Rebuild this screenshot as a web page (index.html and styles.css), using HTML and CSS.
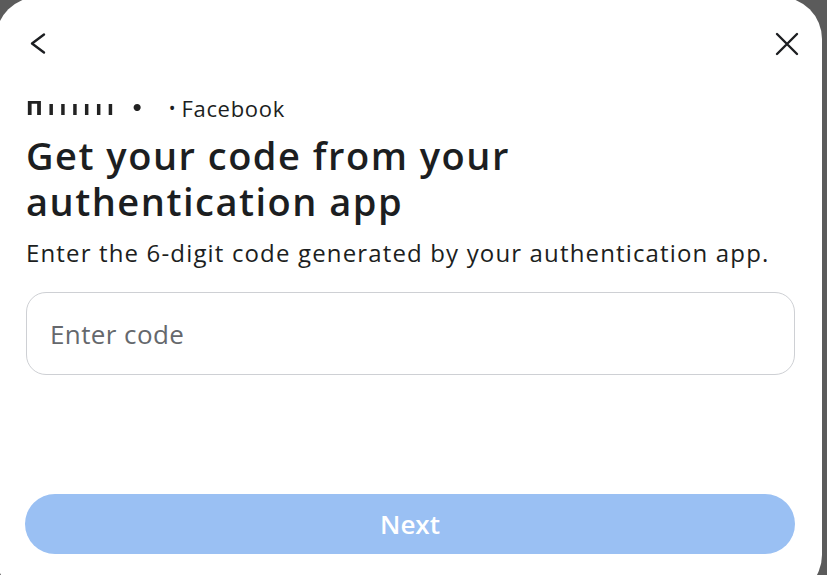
FILE: index.html
```html
<!DOCTYPE html>
<html lang="en">
<head>
<meta charset="utf-8">
<title>Two-factor authentication</title>
<link rel="stylesheet" href="styles.css">
</head>
<body>
<div class="dialog">
  <div class="topbar">
    <button class="icon-btn" aria-label="Back">
      <svg width="24" height="24" viewBox="0 0 24 24"><path d="M18 2.5 L6 11.5 L18 20.5" fill="none" stroke="#1c1e21" stroke-width="2.4" stroke-linecap="round" stroke-linejoin="round"/></svg>
    </button>
    <button class="icon-btn" aria-label="Close">
      <svg width="26" height="26" viewBox="0 0 26 26"><path d="M3 3 L23 23 M23 3 L3 23" fill="none" stroke="#1c1e21" stroke-width="2.4" stroke-linecap="round"/></svg>
    </button>
  </div>
  <div class="content">
    <div class="account"><span class="blurred">Пıııııı •</span><span class="sep">•</span><span class="app">Facebook</span></div>
    <h1 class="title">Get your code from your<br>authentication app</h1>
    <p class="subtitle">Enter the 6-digit code generated by your authentication app.</p>
    <div class="field"><input class="code-input" type="text" placeholder="Enter code"></div>
    <div class="spacer"></div>
    <button class="next-btn" disabled>Next</button>
  </div>
</div>
</body>
</html>
```

FILE: styles.css
```css
html, body {
  margin: 0;
  padding: 0;
  height: 100%;
  overflow: hidden;
  background: #5b5b5b;
}
body {
  font-family: "Open Sans", "Noto Sans", "Liberation Sans", sans-serif;
  color: #1c1e21;
}
.dialog {
  margin: -3px 0 0 -4px;
  width: 826px;
  height: 600px;
  box-sizing: border-box;
  background: #ffffff;
  border-radius: 42px;
  display: flex;
  flex-direction: column;
}
.topbar {
  display: flex;
  justify-content: space-between;
  align-items: center;
  padding: 30px 18px 0 25px;
  height: 34px;
}
.icon-btn {
  border: 0;
  background: none;
  padding: 0;
  width: 34px;
  height: 34px;
  display: flex;
  align-items: center;
  justify-content: center;
}
.content {
  flex: 1;
  display: flex;
  flex-direction: column;
  padding: 0 30px 0 30px;
}
.account {
  margin-top: 33px;
  font-size: 22px;
  line-height: 28px;
  display: flex;
  align-items: center;
}
.blurred {
  font-family: "DejaVu Sans", sans-serif;
  filter: blur(0.7px);
  font-weight: 700;
  letter-spacing: 5px;
  font-size: 20px;
  color: #222;
}
.sep {
  margin: 0 6px 0 20px;
  font-size: 18px;
}
.app {
  letter-spacing: 0.7px;
}
.title {
  margin: 10px 0 0 0;
  font-size: 38px;
  line-height: 46px;
  font-weight: 600;
  letter-spacing: 1.5px;
}
.subtitle {
  margin: 14px 0 0 0;
  font-size: 24px;
  line-height: 30px;
  letter-spacing: 1.15px;
}
.field {
  margin-top: 24px;
}
.code-input {
  box-sizing: border-box;
  width: 769px;
  height: 83px;
  border: 1px solid #ced0d4;
  border-radius: 20px;
  padding: 0 23px;
  font-family: inherit;
  font-size: 26px;
  letter-spacing: 0.4px;
  color: #1c1e21;
  background: #fff;
  outline: none;
}
.code-input::placeholder {
  color: #65686c;
}
.spacer {
  flex: 1;
}
.next-btn {
  width: 770px;
  height: 60px;
  margin-left: -1px;
  margin-bottom: 43px;
  border: 0;
  border-radius: 30px;
  background: #9ac0f3;
  color: #ffffff;
  font-family: inherit;
  font-size: 26px;
  font-weight: 600;
}
```
